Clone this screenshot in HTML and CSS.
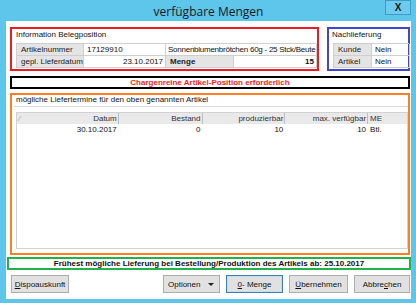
FILE: index.html
```html
<!DOCTYPE html>
<html lang="de">
<head>
<meta charset="utf-8">
<title>verfügbare Mengen</title>
<link rel="stylesheet" href="styles.css">
</head>
<body>
<div class="window">
  <div class="titlebar">
    <span class="title">verfügbare Mengen</span>
    <span class="close">X</span>
  </div>
  <div class="client">
    <div class="top">
      <section class="box red info">
        <div class="caption">Information Belegposition</div>
        <div class="tbl info-tbl">
          <div class="cell lbl">Artikelnummer</div>
          <div class="cell">17129910</div>
          <div class="cell wide desc">Sonnenblumenbrötchen 60g - 25 Stck/Beute</div>
          <div class="cell lbl">gepl. Lieferdatum</div>
          <div class="cell num">23.10.2017</div>
          <div class="cell lbl bold">Menge</div>
          <div class="cell num bold">15</div>
        </div>
      </section>
      <section class="box blue nach">
        <div class="caption">Nachlieferung</div>
        <div class="tbl nach-tbl">
          <div class="cell lbl">Kunde</div>
          <div class="cell">Nein</div>
          <div class="cell lbl">Artikel</div>
          <div class="cell">Nein</div>
        </div>
      </section>
    </div>
    <div class="box black notice">Chargenreine Artikel-Position erforderlich</div>
    <section class="box orange termine">
      <div class="caption">mögliche Liefertermine für den oben genannten Artikel</div>
      <div class="rule"></div>
      <div class="list">
        <div class="lv-head">
          <div class="hc c-datum"><span class="sort">⁄</span>Datum</div>
          <div class="hc c-num">Bestand</div>
          <div class="hc c-num">produzierbar</div>
          <div class="hc c-num">max. verfügbar</div>
          <div class="hc c-me">ME</div>
        </div>
        <div class="lv-row">
          <div class="dc c-datum">30.10.2017</div>
          <div class="dc c-num">0</div>
          <div class="dc c-num">10</div>
          <div class="dc c-num">10</div>
          <div class="dc c-me">Btl.</div>
        </div>
      </div>
    </section>
    <div class="box green earliest">Frühest mögliche Lieferung bei Bestellung/Produktion des Artikels ab: 25.10.2017</div>
    <div class="buttons">
      <button class="btn b-dispo"><u>D</u>ispoauskunft</button>
      <div class="right">
        <button class="btn b-opt"><span>Optionen</span><span class="arrow"></span></button>
        <button class="btn b-menge default"><u>0</u> - Menge</button>
        <button class="btn b-ueber"><u>Ü</u>bernehmen</button>
        <button class="btn b-abbr">Abbre<u>c</u>hen</button>
      </div>
    </div>
  </div>
</div>
</body>
</html>
```

FILE: styles.css
```css
* { box-sizing: border-box; }
html, body { margin: 0; padding: 0; }
body {
  width: 416px;
  height: 303px;
  overflow: hidden;
  background: #5ec5eb;
  font-family: "Liberation Sans", Arial, sans-serif;
  font-size: 8px;
  color: #111;
}
.window {
  width: 416px;
  height: 303px;
  background: #5ec5eb;
  padding: 0 5px 4px 6px;
  display: flex;
  flex-direction: column;
}
.titlebar {
  height: 21px;
  position: relative;
  display: flex;
  align-items: center;
  justify-content: center;
}
.title {
  font-family: "Open Sans", "Noto Sans", sans-serif;
  font-size: 12px;
  color: #1a1a1a;
  margin-top: 1px;
}
.close {
  position: absolute;
  right: 0;
  top: 0;
  width: 26px;
  height: 15px;
  border: 1px solid #3f9cc2;
  background: #6ccbee;
  font-family: "Liberation Sans", sans-serif;
  font-size: 10px;
  font-weight: bold;
  color: #1a1a1a;
  display: flex;
  align-items: center;
  justify-content: center;
}
.client {
  flex: 1;
  background: #fff;
  display: flex;
  flex-direction: column;
  padding-top: 6px;
}
.box { border: 2px solid; }
.red { border-color: #ed1c24; }
.blue { border-color: #3f48cc; }
.black { border-color: #000; }
.orange { border-color: #ff7f27; }
.green { border-color: #22b14c; }

.top { display: flex; height: 44px; }
.info { margin-left: 4px; width: 309px; padding: 0 0 0 4px; }
.nach { margin-left: 8px; width: 83px; padding: 0 0 0 3px; }
.caption {
  height: 11px;
  line-height: 11px;
  white-space: nowrap;
}
.tbl {
  margin-top: 3px;
  display: grid;
  border: 1px solid #cfcfcf;
  border-right: none;
  border-bottom: none;
}
.info-tbl { width: 300px; grid-template-columns: 67px 82px 68px 83px; grid-template-rows: 12px 12px; }
.nach-tbl { width: 76px; grid-template-columns: 38px 38px; grid-template-rows: 12px 12px; margin-left: 1px; }
.cell {
  border-right: 1px solid #cfcfcf;
  border-bottom: 1px solid #cfcfcf;
  line-height: 11px;
  padding: 0 2px 0 3px;
  white-space: nowrap;
  overflow: hidden;
}
.lbl { background: #e4e4e4; color: #222; padding-left: 4px; }
.wide { grid-column: span 2; }
.desc { letter-spacing: -0.25px; padding-left: 2px; padding-right: 0; }
.num { text-align: right; }
.bold { font-weight: bold; }

.notice {
  margin: 5px 0 0 4px;
  width: 400px;
  height: 13px;
  line-height: 9px;
  text-align: center;
  color: #ff1a1a;
  font-weight: bold;
}
.termine {
  margin: 4px 0 0 4px;
  width: 400px;
  height: 162px;
  padding: 0 0 4px 4px;
  display: flex;
  flex-direction: column;
}
.termine .caption { height: 10px; line-height: 10px; }
.rule { height: 1px; background: #d9d9d9; margin: 1px 0 0 -2px; }
.list {
  margin-top: 5px;
  width: 392px;
  flex: 1;
  border: 1px solid #d2d2d2;
}
.lv-head, .lv-row { display: flex; }
.lv-head { height: 11px; background: #e9e9e9; }
.hc {
  line-height: 11px;
  border-right: 1px solid #bdbdbd;
  padding-right: 1px;
  white-space: nowrap;
  color: #333;
}
.lv-row { height: 12px; }
.dc { line-height: 12px; padding-right: 2px; white-space: nowrap; }
.c-datum { width: 102px; text-align: right; position: relative; }
.c-num { width: 84px; text-align: right; }
.c-num + .c-num { width: 83px; }
.c-me { width: 39px; border-right: none; padding-left: 2px; text-align: left; }
.sort { position: absolute; left: 2px; top: 0; color: #999; font-size: 7px; }

.earliest {
  margin: 2px 0 0 1px;
  width: 404px;
  height: 13px;
  line-height: 9px;
  text-align: center;
  font-weight: bold;
  color: #111;
}
.buttons {
  margin-top: 5px;
  height: 18px;
  display: flex;
  padding: 0 1px 0 5px;
}
.right { margin-left: auto; display: flex; gap: 6px; }
.btn {
  height: 18px;
  border: 1px solid #adadad;
  background: #e1e1e1;
  font-family: "Liberation Sans", Arial, sans-serif;
  font-size: 8px;
  color: #111;
  padding: 0;
  display: flex;
  align-items: center;
  justify-content: center;
}
.b-dispo { width: 58px; }
.b-opt { width: 57px; justify-content: space-between; padding: 0 5px 0 4px; }
.arrow {
  width: 0; height: 0;
  border-left: 3px solid transparent;
  border-right: 3px solid transparent;
  border-top: 3px solid #222;
}
.b-menge { width: 57px; }
.default { border-color: #3c7fb1; box-shadow: inset 0 0 0 1px #c7dcef; }
.b-ueber { width: 59px; }
.b-abbr { width: 56px; }
```
